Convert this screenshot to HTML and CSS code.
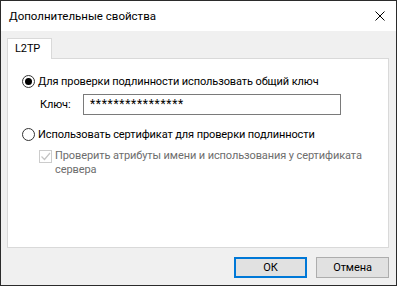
FILE: index.html
```html
<!DOCTYPE html>
<html lang="ru">
<head>
    <meta charset="UTF-8">
    <title>Дополнительные свойства</title>
    <link rel="stylesheet" href="styles.css">
</head>
<body>
    <div class="window">
        <div class="titlebar">
            <span class="title">Дополнительные свойства</span>
            <svg class="close" width="10" height="10" viewBox="0 0 10 10">
                <path d="M0.5 0.5 L9.5 9.5 M9.5 0.5 L0.5 9.5" stroke="#000" stroke-width="1" fill="none"/>
            </svg>
        </div>

        <div class="content">
            <div class="tabs">
                <div class="tab">L2TP</div>
            </div>
            <div class="panel">
                <label class="option">
                    <span class="radio checked"></span>
                    <span>Для проверки подлинности использовать общий ключ</span>
                </label>
                <div class="key-row">
                    <span class="key-label">Ключ:</span>
                    <div class="input">****************</div>
                </div>
                <label class="option second">
                    <span class="radio"></span>
                    <span>Использовать сертификат для проверки подлинности</span>
                </label>
                <label class="check disabled">
                    <span class="box">
                        <svg width="11" height="11" viewBox="0 0 11 11">
                            <path d="M1.5 5.5 L4.5 8.5 L10 2" stroke="#c4c4c4" stroke-width="1.2" fill="none"/>
                        </svg>
                    </span>
                    <span>Проверить атрибуты имени и использования у сертификата сервера</span>
                </label>
            </div>

            <div class="footer">
                <button class="btn default">ОК</button>
                <button class="btn">Отмена</button>
            </div>
        </div>
    </div>
</body>
</html>
```

FILE: styles.css
```css
body {
    margin: 0;
    font-family: Roboto, "Noto Sans", Arial, sans-serif;
    font-size: 11px;
    letter-spacing: -0.1px;
    color: #000;
    background-color: #fff;
}
.window {
    width: 397px;
    height: 286px;
    box-sizing: border-box;
    border: 1px solid #2b2b2b;
    display: flex;
    flex-direction: column;
    background-color: #f0f0f0;
}
.titlebar {
    height: 30px;
    background-color: #fff;
    display: flex;
    align-items: center;
    justify-content: space-between;
    padding: 0 11px 0 8px;
}
.title {
    font-size: 11.5px;
    letter-spacing: 0;
}
.close {
    display: block;
}
.content {
    padding: 7px 7px 0 6px;
    flex: 1;
    display: flex;
    flex-direction: column;
}
.tabs {
    display: flex;
    height: 20px;
}
.tab {
    width: 45px;
    height: 21px;
    box-sizing: border-box;
    border: 1px solid #d9d9d9;
    border-bottom: none;
    background-color: #fff;
    padding: 3px 0 0 7px;
    position: relative;
    z-index: 1;
}
.panel {
    height: 190px;
    box-sizing: border-box;
    border: 1px solid #d9d9d9;
    background-color: #fff;
    padding: 14px 0 0 14px;
}
.option {
    display: flex;
    align-items: center;
    gap: 3px;
    height: 16px;
}
.option.second {
    margin-top: 11px;
}
.radio {
    width: 13px;
    height: 13px;
    box-sizing: border-box;
    border: 1px solid #333;
    border-radius: 50%;
    display: flex;
    align-items: center;
    justify-content: center;
}
.radio.checked::after {
    content: "";
    width: 7px;
    height: 7px;
    border-radius: 50%;
    background-color: #000;
}
.key-row {
    display: flex;
    align-items: center;
    margin-top: 5px;
    padding-left: 18px;
}
.key-label {
    width: 43px;
}
.input {
    width: 258px;
    height: 21px;
    box-sizing: border-box;
    border: 1px solid #7a7a7a;
    padding: 1px 0 0 6px;
    line-height: 17px;
    font-size: 12px;
    letter-spacing: 0.7px;
}
.check {
    display: flex;
    align-items: flex-start;
    gap: 3px;
    margin-top: 7px;
    padding-left: 17px;
    width: 350px;
    box-sizing: border-box;
    line-height: 14px;
}
.check.disabled {
    color: #6d6d6d;
}
.box {
    width: 13px;
    height: 13px;
    box-sizing: border-box;
    border: 1px solid #cccccc;
    display: flex;
    align-items: center;
    justify-content: center;
    margin-top: 1px;
    flex-shrink: 0;
}
.footer {
    display: flex;
    justify-content: flex-end;
    gap: 9px;
    margin-top: 9px;
}
.btn {
    width: 73px;
    height: 21px;
    box-sizing: border-box;
    border: 1px solid #adadad;
    background-color: #e1e1e1;
    font-family: inherit;
    font-size: 11px;
    letter-spacing: -0.1px;
    padding: 0;
    color: #000;
}
.btn.default {
    border: 2px solid #0078d7;
}
```
